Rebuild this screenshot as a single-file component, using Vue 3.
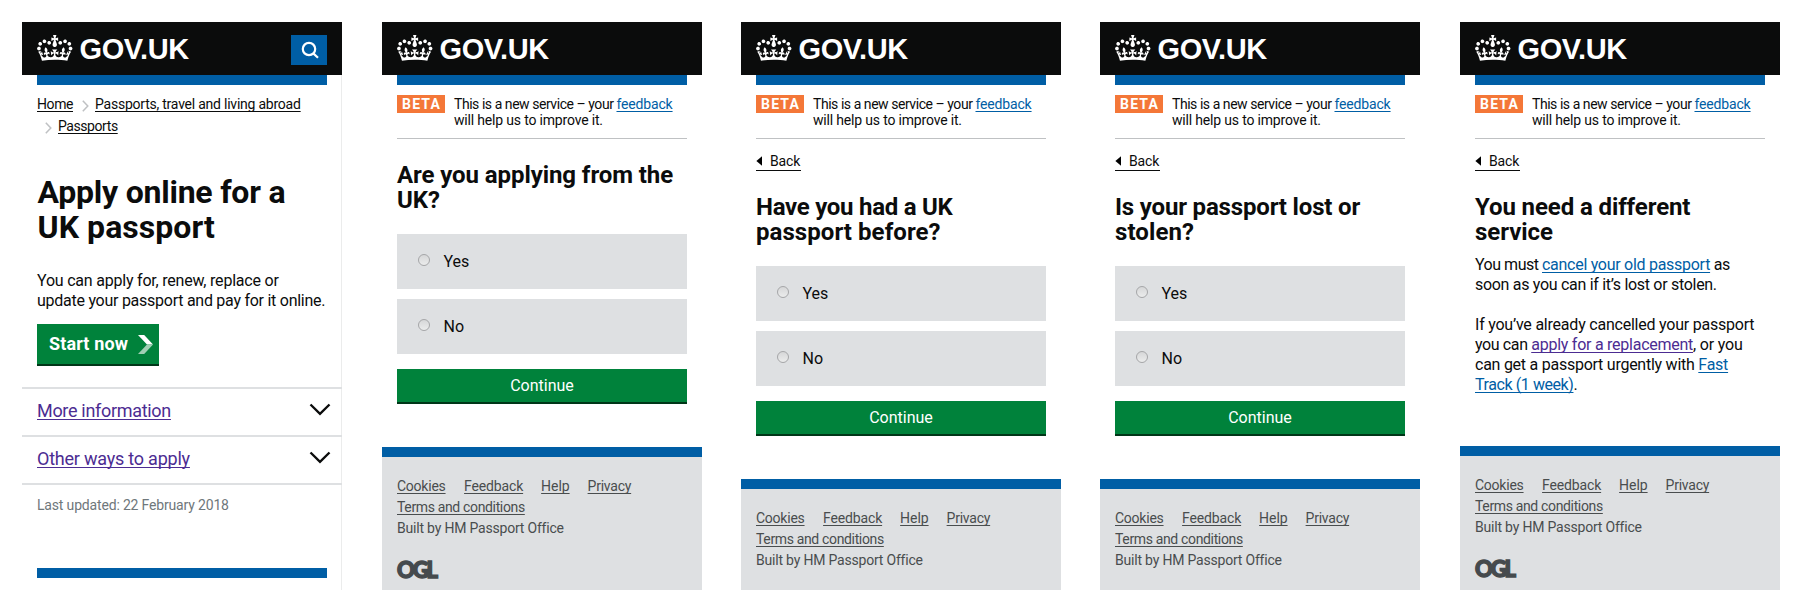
<script setup>
// `track` is the letter-spacing of a line, in hundredths of a pixel.
const ls = (track) => ({ letterSpacing: `${track / 100}px` })

const question = (title, back) => ({
  kind: 'question',
  title,
  back,
  options: ['Yes', 'No'],
})

const screens = [
  question([{ t: 'Are you applying from the', track: -8 }, { t: 'UK?', track: 0 }], false),
  question([{ t: 'Have you had a UK', track: -27 }, { t: 'passport before?', track: 6 }], true),
  question([{ t: 'Is your passport lost or', track: -17 }, { t: 'stolen?', track: 9 }], true),
  {
    kind: 'message',
    title: [{ t: 'You need a different', track: -11 }, { t: 'service', track: -5 }],
    back: true,
  },
]

const footerLinks = [
  { t: 'Cookies', track: -24, w: 'w-cookies' },
  { t: 'Feedback', track: -15, w: 'w-feedback' },
  { t: 'Help', track: -5, w: 'w-help' },
  { t: 'Privacy', track: -24, w: 'w-privacy' },
]

const CROWN =
  'M25 30.2c3.5 1.5 7.7-.2 9.1-3.7 1.5-3.6-.2-7.8-3.9-9.2-3.6-1.4-7.6.3-9.1 3.9-1.4 3.5.3 7.5 3.9 9zM9 39.5c3.6 1.5 7.8-.2 9.2-3.7 1.5-3.6-.2-7.8-3.9-9.1-3.6-1.5-7.6.2-9.1 3.8-1.4 3.5.3 7.5 3.8 9zM4.4 57.2c3.5 1.5 7.7-.2 9.1-3.8 1.5-3.6-.2-7.7-3.9-9.1-3.5-1.5-7.6.3-9.1 3.8-1.4 3.5.3 7.6 3.9 9.1zm38.3-21.4c3.5 1.5 7.7-.2 9.1-3.8 1.5-3.6-.2-7.7-3.9-9.1-3.6-1.5-7.6.3-9.1 3.8-1.3 3.6.4 7.7 3.9 9.1zm64.4-5.6c-3.6 1.5-7.8-.2-9.1-3.7-1.5-3.6.2-7.8 3.8-9.2 3.6-1.4 7.7.3 9.2 3.9 1.3 3.5-.4 7.5-3.9 9zm15.9 9.3c-3.6 1.5-7.7-.2-9.1-3.7-1.5-3.6.2-7.8 3.7-9.1 3.6-1.5 7.7.2 9.2 3.8 1.5 3.5-.3 7.5-3.8 9zm4.7 17.7c-3.6 1.5-7.8-.2-9.2-3.8-1.5-3.6.2-7.7 3.9-9.1 3.6-1.5 7.7.3 9.2 3.8 1.3 3.5-.4 7.6-3.9 9.1zM89.3 35.8c-3.6 1.5-7.8-.2-9.2-3.8-1.4-3.6.2-7.7 3.9-9.1 3.6-1.5 7.7.3 9.2 3.8 1.4 3.6-.3 7.7-3.9 9.1zM69.7 17.7l8.9 4.7V9.3l-8.9 2.8c-.2-.3-.5-.6-.9-.9L72.4 0H59.6l3.5 11.2c-.3.3-.6.5-.9.9l-8.8-2.8v13.1l8.8-4.7c.3.3.6.7.9.9l-5 15.4v.1c-.2.8-.4 1.6-.4 2.4 0 4.1 3.1 7.5 7 8.1h.2c.3 0 .7.1 1 .1.4 0 .7 0 1-.1h.2c4-.6 7.1-4.1 7.1-8.1 0-.8-.1-1.7-.4-2.4V34l-5.1-15.4c.4-.2.7-.6 1-.9zM66 92.8c16.9 0 32.8 1.1 47.1 3.2 4-16.9 8.9-26.7 14-33.5l-9.6-3.4c1 4.9 1.1 7.2 0 10.2-1.5-1.4-3-4.3-4.2-8.7L108.6 76c2.8-2 5-3.2 7.5-3.3-4.4 9.4-10 11.9-13.6 11.2-4.3-.8-6.3-4.6-5.6-7.9 1-4.7 5.7-5.9 8-.5 4.3-8.7-3-11.4-7.6-8.8 7.1-7.2 7.9-13.5 2.1-21.1-8 6.1-8.1 12.3-4.5 20.8-4.7-5.4-12.1-2.5-9.5 6.2 3.4-5.2 7.9-2 7.2 3.1-.6 4.3-6.4 7.8-13.5 7.2-10.3-.9-10.9-8-11.2-13.8 2.5-.5 7.1 1.8 11 7.3L80.2 60c-4.1 4.4-8 5.3-12.3 5.4 1.4-4.4 8-11.6 8-11.6H55.5s6.4 7.2 7.9 11.6c-4.2-.1-8-1-12.3-5.4l1.4 16.4c3.9-5.5 8.5-7.7 10.9-7.3-.3 5.8-.9 12.8-11.1 13.8-7.2.6-12.9-2.9-13.5-7.2-.7-5 3.8-8.3 7.1-3.1 2.7-8.7-4.6-11.6-9.4-6.2 3.7-8.5 3.6-14.7-4.6-20.8-5.8 7.6-5 13.9 2.2 21.1-4.7-2.6-11.9.1-7.7 8.8 2.3-5.5 7.1-4.2 8.1.5.7 3.3-1.3 7.1-5.7 7.9-3.5.7-9-1.8-13.5-11.2 2.5.1 4.7 1.3 7.5 3.3l-4.7-15.4c-1.2 4.4-2.7 7.2-4.3 8.7-1.1-3-.9-5.3 0-10.2l-9.5 3.4c5 6.9 9.9 16.7 14 33.5 14.8-2.1 30.8-3.2 47.7-3.2z'
</script>

<template>
  <main class="board">
    <section class="phone phone-start">
      <header class="header">
        <svg class="crown" viewBox="0 0 132 97"><path :d="CROWN" /></svg>
        <span class="wordmark">GOV.UK</span>
        <button class="search" type="button" aria-label="Search">
          <svg viewBox="0 0 36 30">
            <circle cx="18" cy="14" r="6.2" />
            <path d="M22.3 18.4 27 22.8" />
          </svg>
        </button>
      </header>
      <div class="body">
        <div class="bar"></div>
        <nav class="crumbs">
          <div class="crumb-line">
            <a class="ink" :style="ls(-42)">Home</a>
            <svg class="crumb-arrow" viewBox="0 0 7 12"><path d="M.8.8 5.8 6 .8 11.2" /></svg>
            <a class="ink" :style="ls(-23)">Passports, travel and living abroad</a>
          </div>
          <div class="crumb-line crumb-second">
            <svg class="crumb-arrow" viewBox="0 0 7 12"><path d="M.8.8 5.8 6 .8 11.2" /></svg>
            <a class="ink" :style="ls(-43)">Passports</a>
          </div>
        </nav>
        <h1>
          <span class="line" :style="ls(-23)">Apply online for a</span>
          <span class="line" :style="ls(6)">UK passport</span>
        </h1>
        <p class="copy">
          <span class="line" :style="ls(-21)">You can apply for, renew, replace or</span>
          <span class="line" :style="ls(-26)">update your passport and pay for it online.</span>
        </p>
        <button class="start" type="button">
          <span :style="ls(13)">Start now</span>
          <svg viewBox="0 0 15 19">
            <path class="arrow-top" d="M0 0h6.2L15 9.5H9z" />
            <path class="arrow-bottom" d="M9 9.5h6L6.2 19H0z" />
          </svg>
        </button>
      </div>
      <ul class="more">
        <li>
          <a class="visited" :style="ls(-31)">More information</a>
          <svg viewBox="0 0 22 13"><path d="M1.5 1.5 11 10.8 20.5 1.5" /></svg>
        </li>
        <li>
          <a class="visited" :style="ls(-22)">Other ways to apply</a>
          <svg viewBox="0 0 22 13"><path d="M1.5 1.5 11 10.8 20.5 1.5" /></svg>
        </li>
      </ul>
      <div class="body">
        <p class="updated" :style="ls(-17)">Last updated: 22 February 2018</p>
        <div class="bar"></div>
      </div>
    </section>

    <section v-for="(s, i) in screens" :key="i" class="phone" :class="s.kind">
      <header class="header">
        <svg class="crown" viewBox="0 0 132 97"><path :d="CROWN" /></svg>
        <span class="wordmark">GOV.UK</span>
      </header>
      <div class="body">
        <div class="bar"></div>
        <div class="phase">
          <strong class="beta">BETA</strong>
          <p>
            <span class="line"><span :style="ls(-45)">This is a new service – your </span><a class="link" :style="ls(-16)">feedback</a></span>
            <span class="line" :style="ls(-18)">will help us to improve it.</span>
          </p>
        </div>
        <a v-if="s.back" class="back">
          <svg viewBox="0 0 6 10"><path d="M6 .3v9.4L.4 5z" /></svg>
          <span :style="ls(-15)">Back</span>
        </a>
        <h2>
          <span v-for="l in s.title" :key="l.t" class="line" :style="ls(l.track)">{{ l.t }}</span>
        </h2>
        <template v-if="s.kind === 'question'">
          <label v-for="o in s.options" :key="o" class="option">
            <span class="radio"></span>
            <span class="option-text">{{ o }}</span>
          </label>
          <button class="continue" type="button">Continue</button>
        </template>
        <div v-else class="message-copy">
          <p class="copy">
            <span class="line"><span :style="ls(-48)">You must </span><a class="link" :style="ls(-28)">cancel your old passport</a><span :style="ls(-40)"> as</span></span>
            <span class="line" :style="ls(-30)">soon as you can if it’s lost or stolen.</span>
          </p>
          <p class="copy">
            <span class="line" :style="ls(-22)">If you’ve already cancelled your passport</span>
            <span class="line"><span :style="ls(-38)">you can </span><a class="visited" :style="ls(-25)">apply for a replacement</a><span :style="ls(-20)">, or you</span></span>
            <span class="line" :style="ls(-25)">can get a passport urgently with <a class="link">Fast</a></span>
            <span class="line" :style="ls(-42)"><a class="link">Track (1 week)</a>.</span>
          </p>
        </div>
      </div>
      <footer class="footer">
        <div class="footer-links">
          <a v-for="l in footerLinks" :key="l.t" :class="l.w" :style="ls(l.track)">{{ l.t }}</a>
        </div>
        <div><a :style="ls(-35)">Terms and conditions</a></div>
        <div :style="ls(-20)">Built by HM Passport Office</div>
        <svg v-if="!s.back || s.kind === 'message'" class="ogl" viewBox="0 0 42 18">
          <text x="0" y="16.8" textLength="41" lengthAdjust="spacing">OGL</text>
        </svg>
      </footer>
    </section>
  </main>
</template>

<style>
body {
  background: #fff;
}
</style>

<style scoped>
.board {
  box-sizing: border-box;
  width: 1801px;
  height: 608px;
  padding: 22px 21px 18px 22px;
  display: grid;
  grid-template-columns: 360px 359px 359px 360px 320px;
  font-family: Roboto, "Liberation Sans", sans-serif;
  color: #0b0c0c;
  overflow: hidden;
}
.phone {
  box-sizing: border-box;
  width: 320px;
  height: 568px;
  display: flex;
  flex-direction: column;
}
.phone-start {
  box-shadow: inset -1px 0 #ebecec;
}
h1, h2, p, ul {
  margin: 0;
  padding: 0;
}
button {
  border: 0;
  padding: 0;
  font-family: inherit;
  color: #fff;
}
.line {
  display: block;
  white-space: nowrap;
}
a {
  text-decoration: underline;
  text-decoration-thickness: 1px;
  text-underline-offset: 2px;
  text-decoration-skip-ink: none;
}
.ink {
  color: #0b0c0c;
}
.link {
  color: #005ea5;
}
.visited {
  color: #4c2c92;
}

.header {
  flex: none;
  box-sizing: border-box;
  height: 53px;
  padding: 0 15px;
  display: flex;
  align-items: center;
  background: #0b0c0c;
}
.crown {
  width: 35.5px;
  height: 26px;
  margin-bottom: 2px;
  fill: #fff;
}
.wordmark {
  margin-left: 7px;
  font: bold 29px/32px "Liberation Sans", sans-serif;
  letter-spacing: -0.4px;
  color: #fff;
}
.search {
  width: 36px;
  height: 30px;
  margin-left: auto;
  margin-top: 3px;
  background: #005ea5;
}
.search svg {
  display: block;
  width: 36px;
  height: 30px;
  fill: none;
  stroke: #fff;
  stroke-width: 2.2;
}
.body {
  padding: 0 15px;
}
.bar {
  height: 10px;
  background: #005ea5;
}

.crumbs {
  padding-top: 8px;
  font-size: 14px;
  line-height: 22px;
}
.crumb-line {
  display: flex;
  align-items: center;
  white-space: nowrap;
}
.crumb-arrow {
  width: 7px;
  height: 12px;
  margin: 3px 6px 0 9px;
  fill: none;
  stroke: #bfc1c3;
  stroke-width: 1.5;
}
.crumb-second .crumb-arrow {
  margin-left: 8px;
}
h1 {
  margin-top: 38px;
  padding-left: 0.5px;
  font-size: 32px;
  line-height: 35px;
}
.copy {
  font-size: 16px;
  line-height: 20px;
}
h1 + .copy {
  margin-top: 26px;
}
.start {
  display: flex;
  align-items: center;
  gap: 10px;
  width: 122px;
  height: 40px;
  margin-top: 13px;
  padding-left: 12px;
  background: #00823b;
  box-shadow: 0 2px #003618;
  font-size: 18px;
  font-weight: 700;
  white-space: nowrap;
}
.start span {
  margin-bottom: 2px;
}
.start svg {
  width: 15px;
  height: 19px;
}
.arrow-top {
  fill: #fff;
}
.arrow-bottom {
  fill: #9fcfb3;
}
.more {
  margin-top: 23px;
  list-style: none;
  border-bottom: 2px solid #dee0e2;
}
.more li {
  box-sizing: border-box;
  height: 48px;
  padding: 0 11px 2px 15px;
  border-top: 2px solid #dee0e2;
  display: flex;
  align-items: center;
  justify-content: space-between;
  font-size: 18px;
  line-height: 20px;
}
.more svg {
  width: 22px;
  height: 13px;
  margin-bottom: 3px;
  fill: none;
  stroke: #0b0c0c;
  stroke-width: 2.4;
}
.updated {
  margin: 12px 0 55px;
  font-size: 14px;
  line-height: 16px;
  color: #6f777b;
}

.phase {
  display: flex;
  align-items: flex-start;
  gap: 9px;
  padding: 10px 0;
  border-bottom: 1px solid #bfc1c3;
  font-size: 14px;
  line-height: 16px;
}
.phase p {
  padding-top: 1px;
}
.beta {
  box-sizing: border-box;
  width: 48px;
  height: 18px;
  padding-left: 5px;
  background: #f47738;
  color: #fff;
  line-height: 18px;
  letter-spacing: 1.2px;
}
.back {
  display: flex;
  align-items: center;
  gap: 8px;
  width: 45px;
  height: 18px;
  margin-top: 13px;
  border-bottom: 1px solid #0b0c0c;
  text-decoration: none;
  font-size: 14px;
  line-height: 18px;
}
.back svg {
  flex: none;
  width: 6px;
  height: 10px;
}
h2 {
  margin-top: 24px;
  font-size: 24px;
  line-height: 25px;
}
.back + h2 {
  margin-top: 24px;
}
.option {
  box-sizing: border-box;
  height: 55px;
  padding-left: 21px;
  display: flex;
  align-items: center;
  gap: 13.5px;
  background: #dee0e2;
  font-size: 16px;
  line-height: 20px;
}
.option-text {
  padding-top: 1px;
}
h2 + .option {
  margin: 21px 0 10px;
}
.radio {
  box-sizing: border-box;
  width: 12px;
  height: 12px;
  margin-bottom: 3px;
  border: 1px solid #a5a6a8;
  border-radius: 50%;
  background: linear-gradient(#d6d7d8, #ebecec);
}
.continue {
  display: block;
  width: 100%;
  height: 33px;
  margin-top: 15px;
  background: #00823b;
  box-shadow: 0 2px #003618;
  font-size: 16px;
  line-height: 33px;
}
.message-copy {
  display: flex;
  flex-direction: column;
  gap: 20px;
  margin-top: 10px;
}
.footer {
  flex: 1;
  margin-top: 45px;
  padding: 19px 15px 0;
  border-top: 10px solid #005ea5;
  background: #dee0e2;
  color: #494d4e;
  font-size: 14px;
  line-height: 21px;
}
.message .footer {
  margin-top: 50.5px;
}
.footer-links {
  display: flex;
}
.w-cookies {
  margin-right: 18.5px;
}
.w-feedback {
  margin-right: 18px;
}
.w-help {
  margin-right: 18px;
}
.ogl {
  display: block;
  width: 42px;
  height: 18px;
  margin-top: 22px;
  overflow: visible;
}
.ogl text {
  font-family: Lato, sans-serif;
  font-size: 22px;
  font-weight: 900;
  fill: #454a4d;
  stroke: #454a4d;
  stroke-width: 1.4;
}
</style>
